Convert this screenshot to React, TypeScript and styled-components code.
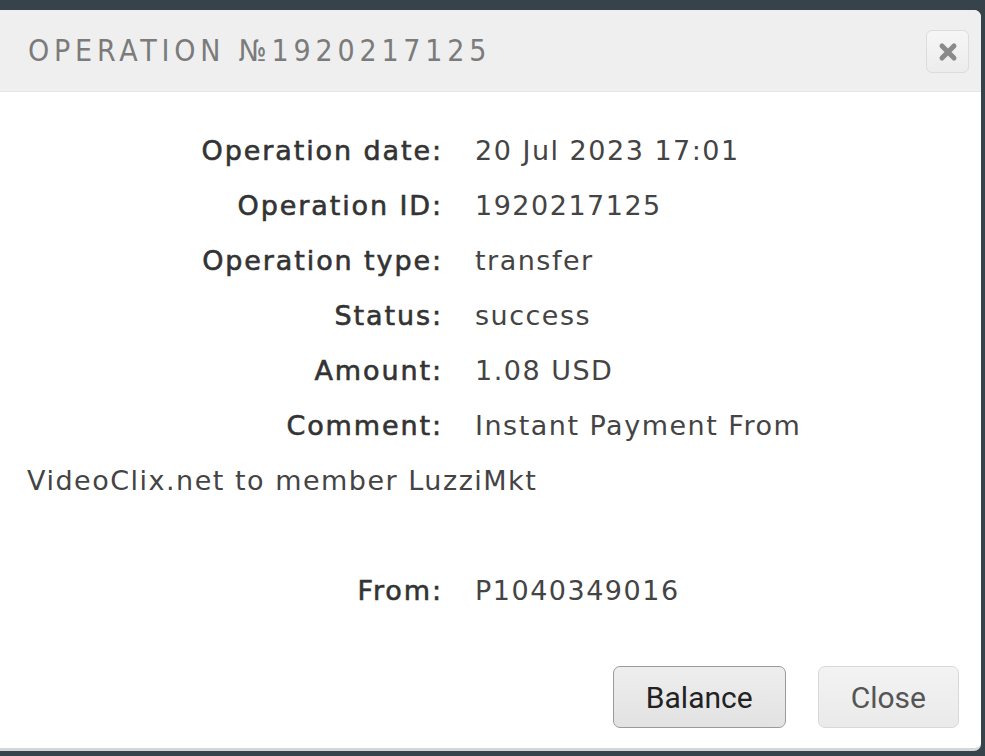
import styled, { createGlobalStyle } from "styled-components"

const GlobalStyle = createGlobalStyle`
  html, body {
    margin: 0;
    padding: 0;
    background: #36434b;
  }
`

const Dialog = styled.div`
  width: 981px;
  height: 741px;
  margin-top: 10px;
  background: #ffffff;
  border-radius: 0 7px 7px 0;
  border-bottom: 3px solid #d4d6d8;
  box-sizing: border-box;
  display: flex;
  flex-direction: column;
  overflow: hidden;
`

const Header = styled.div`
  height: 82px;
  flex-shrink: 0;
  background: #efefef;
  border-bottom: 1px solid #e6e6e6;
  box-sizing: border-box;
  display: flex;
  align-items: center;
  justify-content: space-between;
  padding: 0 12px 0 28px;
`

const Title = styled.h2`
  margin: 0;
  font-family: "DejaVu Sans", sans-serif;
  font-stretch: condensed;
  font-weight: 400;
  font-size: 30px;
  letter-spacing: 4.8px;
  color: #7b7b7b;
`

const XButton = styled.button`
  width: 43px;
  height: 43px;
  margin-top: 2px;
  border: 1px solid #dcdcdc;
  border-radius: 6px;
  background: linear-gradient(#f6f6f6, #ececec);
  display: flex;
  align-items: center;
  justify-content: center;
  padding: 0;
`

const Body = styled.div`
  flex: 1;
  padding: 31px 27px 0 27px;
  font-family: "DejaVu Sans", sans-serif;
  font-size: 27px;
  line-height: 55px;
  color: #444;
`

const Row = styled.div<{ $gap?: boolean }>`
  margin-top: ${(p) => (p.$gap ? "55px" : "0")};
`

const Label = styled.span`
  display: inline-block;
  width: 416px;
  margin-right: 32px;
  text-align: right;
  font-weight: 400;
  letter-spacing: 1.9px;
  -webkit-text-stroke: 0.6px #333;
  color: #333;
`

const Value = styled.span`
  font-weight: 400;
  letter-spacing: 1.5px;
  color: #444;
`

const Footer = styled.div`
  display: flex;
  justify-content: flex-end;
  gap: 32px;
  padding: 0 22px 20px 0;
`

const Button = styled.button<{ $muted?: boolean }>`
  height: 62px;
  padding: 0 32px;
  border-radius: 7px;
  font-family: Roboto, sans-serif;
  font-size: 30px;
  border: 1px solid ${(p) => (p.$muted ? "#d8d8d8" : "#9a9a9a")};
  color: ${(p) => (p.$muted ? "#555" : "#222")};
  background: ${(p) =>
    p.$muted
      ? "linear-gradient(#f3f3f3, #eaeaea)"
      : "linear-gradient(#eeeeee, #e2e2e2)"};
`

const rows = [
  ["Operation date:", "20 Jul 2023 17:01"],
  ["Operation ID:", "1920217125"],
  ["Operation type:", "transfer"],
  ["Status:", "success"],
  ["Amount:", "1.08 USD"],
  ["Comment:", "Instant Payment From VideoClix.net to member LuzziMkt"],
]

export default function App() {
  return (
    <>
      <GlobalStyle />
      <Dialog>
        <Header>
          <Title>OPERATION №1920217125</Title>
          <XButton aria-label="close">
            <svg width="20" height="20" viewBox="0 0 20 20">
              <path d="M4 4 L16 16 M16 4 L4 16" stroke="#8a8a8a" strokeWidth="5" strokeLinecap="round" />
            </svg>
          </XButton>
        </Header>
        <Body>
          {rows.map(([k, v]) => (
            <Row key={k}>
              <Label>{k}</Label>
              <Value>{v}</Value>
            </Row>
          ))}
          <Row $gap>
            <Label>From:</Label>
            <Value>P1040349016</Value>
          </Row>
        </Body>
        <Footer>
          <Button>Balance</Button>
          <Button $muted>Close</Button>
        </Footer>
      </Dialog>
    </>
  )
}
